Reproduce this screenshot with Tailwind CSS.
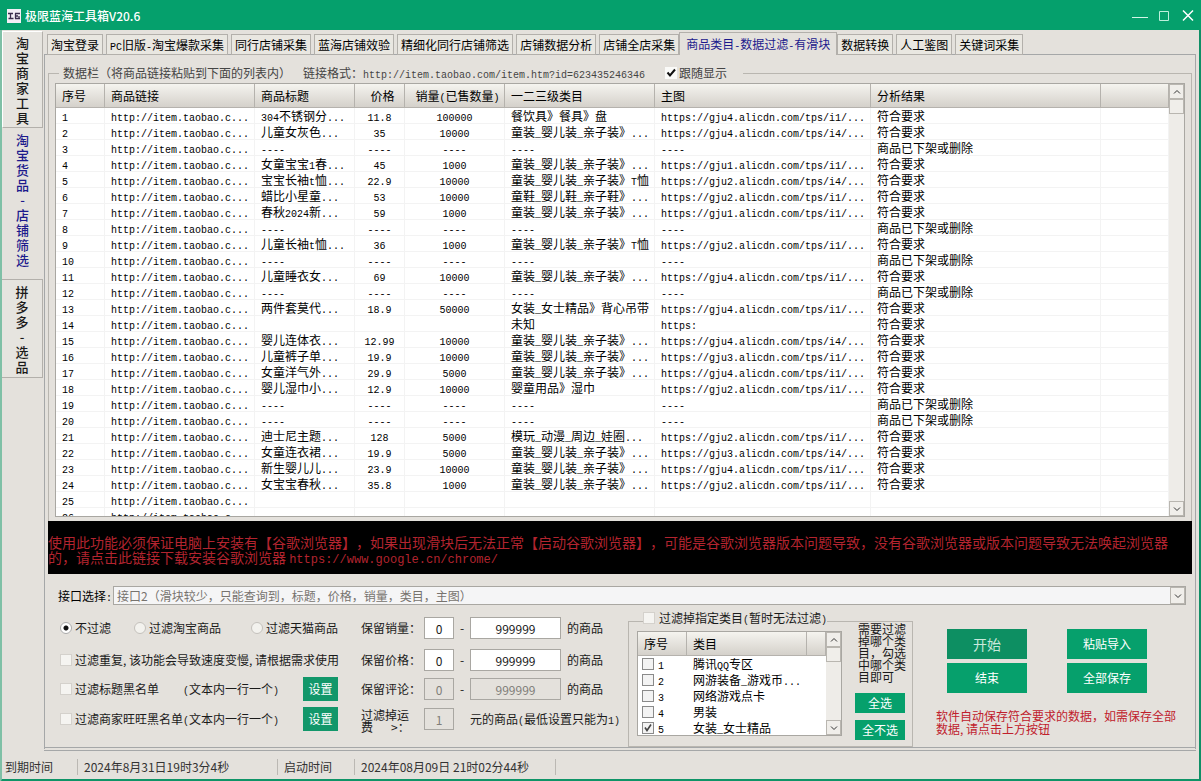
<!DOCTYPE html>
<html lang="zh-CN">
<head>
<meta charset="utf-8">
<title>极限蓝海工具箱V20.6</title>
<script src="https://cdn.jsdelivr.net/npm/@tailwindcss/browser@4"></script>
</head>
<body class="flex min-h-screen flex-col bg-[#e4e1dc] font-['Noto_Sans_CJK_SC',sans-serif] text-xs leading-4 text-[#1a1a1a] [text-spacing-trim:space-all]">

<header class="flex h-[30px] shrink-0 items-center bg-[#05a06c] pt-px pr-[5px] pl-[7px] text-white">
  <svg class="h-[14px] w-[14px] shrink-0" viewBox="0 0 14 14"><rect width="14" height="14" fill="#f3eef6"/><path d="M1 4.5h5M1.500 9.500h5M3.500 4.500v5M8 4.500h5M8.500 4.500v5M8 9.500h5M12 7v2.500M8.500 7h2.500" stroke="#3a2d4d" stroke-width="1.300" fill="none"/></svg>
  <h1 class="ml-1 grow font-medium">极限蓝海工具箱V20.6</h1>
  <div class="flex items-center gap-2">
    <button type="button" aria-label="最小化" class="h-4 w-4"><svg viewBox="0 0 16 16" class="h-4 w-4"><path d="M0 9.500h16" stroke="#d3f5e7" fill="none"/></svg></button>
    <button type="button" aria-label="最大化" class="h-4 w-4"><svg viewBox="0 0 16 16" class="h-4 w-4"><path d="M3.500 3.500h9v9h-9z" stroke="#bdf0dc" fill="none"/></svg></button>
    <button type="button" aria-label="关闭" class="h-4 w-4"><svg viewBox="0 0 16 16" class="h-4 w-4"><path d="M3 2.500l10 10M13 2.500l-10 10" stroke="#fff" stroke-width="1.500" fill="none"/></svg></button>
  </div>
</header>

<div class="flex grow flex-col border-x-2 border-b-4 border-l-[#7fc0a6] border-r-[#0f8f66] border-b-[#0f9467]">
  <div class="flex grow">
    <nav class="flex w-[41px] shrink-0 flex-col pt-px text-[13px] font-medium leading-[15px]">
      <button type="button" class="flex h-[97px] items-center justify-center border border-[#b3b0ab] bg-[#e6e4df] border-t-white border-l-white"><span class="w-[14px] break-all text-center">淘宝商家工具</span></button>
      <button type="button" class="flex h-[152px] justify-center border-b border-[#b3b0ab] pt-1 text-[#1c1a8c]"><span class="w-[14px] break-all text-center">淘宝货品<br>-<br>店铺筛选</span></button>
      <button type="button" class="flex h-[98px] justify-center border-r border-b border-[#b3b0ab] bg-[#e6e4df] pt-1"><span class="w-[14px] break-all text-center">拼多多<br>-<br>选品</span></button>
    </nav>

    <main class="ml-px flex min-w-0 grow flex-col pt-[2px] pr-[3px]">
      <div class="relative z-10 -mb-px flex items-end gap-[3px] pl-[3px] whitespace-nowrap text-black" role="tablist">
        <button type="button" role="tab" class="h-[21px] border border-[#b3b0ab] bg-[#e9e7e1] px-[3px]">淘宝登录</button>
        <button type="button" role="tab" class="h-[21px] border border-[#b3b0ab] bg-[#e9e7e1] px-[3px]"><span class="font-['Liberation_Mono',monospace] text-[10px] leading-[0]">PC</span>旧版<span class="font-['Liberation_Mono',monospace] text-[10px] leading-[0]">-</span>淘宝爆款采集</button>
        <button type="button" role="tab" class="h-[21px] border border-[#b3b0ab] bg-[#e9e7e1] px-[3px]">同行店铺采集</button>
        <button type="button" role="tab" class="h-[21px] border border-[#b3b0ab] bg-[#e9e7e1] px-[3px]">蓝海店铺效验</button>
        <button type="button" role="tab" class="h-[21px] border border-[#b3b0ab] bg-[#e9e7e1] px-[3px]">精细化同行店铺筛选</button>
        <button type="button" role="tab" class="h-[21px] border border-[#b3b0ab] bg-[#e9e7e1] px-[3px]">店铺数据分析</button>
        <button type="button" role="tab" class="h-[21px] border border-[#b3b0ab] bg-[#e9e7e1] px-[3px]">店铺全店采集</button>
        <button type="button" role="tab" aria-selected="true" class="-ml-[3px] h-[23px] border border-b-0 border-[#b3b0ab] bg-[#e4e1dc] px-[6px] text-[#1c1a8c]">商品类目<span class="font-['Liberation_Mono',monospace] text-[10px] leading-[0]">-</span>数据过滤<span class="font-['Liberation_Mono',monospace] text-[10px] leading-[0]">-</span>有滑块</button>
        <button type="button" role="tab" class="-ml-[3px] h-[21px] border border-[#b3b0ab] bg-[#e9e7e1] px-[3px]">数据转换</button>
        <button type="button" role="tab" class="h-[21px] border border-[#b3b0ab] bg-[#e9e7e1] px-[3px]">人工鉴图</button>
        <button type="button" role="tab" class="h-[21px] border border-[#b3b0ab] bg-[#e9e7e1] px-[3px]">关键词采集</button>
      </div>

      <section class="flex grow flex-col border border-[#a5a7a8] border-b-4 border-b-[#a5a7a8] px-[3px] [border-bottom-style:double]">
        <fieldset class="mt-2 border border-b-0 border-[#b9b6b0] px-[6px] pb-1">
          <legend class="ml-1 flex h-5 items-center gap-5 pr-4 pl-1 text-[#444]">
            <span class="flex gap-3 whitespace-nowrap"><span>数据栏（将商品链接粘贴到下面的列表内）</span><span>链接格式：<span class="font-['Liberation_Mono',monospace] text-[10px] leading-[0]">http://item.taobao.com/item.htm?id=623435246346</span></span></span>
            <label class="flex items-center gap-[2px] whitespace-nowrap"><span class="grid"><input type="checkbox" checked class="col-start-1 row-start-1 h-3 w-3 appearance-none bg-[#fafaf8]"><svg class="pointer-events-none col-start-1 row-start-1 h-3 w-3" viewBox="0 0 12 12"><path d="M2.500 5.500l2.500 3 5-6" fill="none" stroke="#111" stroke-width="2"/></svg></span>跟随显示</label>
          </legend>
          <div class="flex h-[434px] border border-[#a9a7a2] bg-white">
            <div class="min-w-0 grow overflow-hidden">
              <table class="w-full table-fixed border-separate border-spacing-0 text-left text-black">
                <colgroup><col class="w-[49px]"><col class="w-[150px]"><col class="w-[100px]"><col class="w-[50px]"><col class="w-[100px]"><col class="w-[150px]"><col class="w-[216px]"><col class="w-[230px]"><col></colgroup>
                <thead class="bg-linear-to-b from-[#f5f4ef] to-[#d3cfc9]">
                  <tr class="h-6 whitespace-nowrap *:border-r *:border-b *:border-[#b5b2ad] *:p-0 *:pl-[6px] *:font-normal">
                    <th>序号</th><th>商品链接</th><th>商品标题</th><th class="text-center">价格</th><th class="text-center">销量<span class="font-['Liberation_Mono',monospace] text-[10px] leading-[0]">(</span>已售数量<span class="font-['Liberation_Mono',monospace] text-[10px] leading-[0]">)</span></th><th>一二三级类目</th><th>主图</th><th>分析结果</th><th></th>
                  </tr>
                </thead>
                <tbody id="goods"></tbody>
              </table>
            </div>
            <div class="flex w-[15px] shrink-0 flex-col bg-[#eeece8]">
              <div class="flex h-[15px] items-center justify-center border border-[#b9b6b0] bg-[#f0eeea]"><svg class="h-2 w-2" viewBox="0 0 8 8"><path d="M1 5.500l3-3 3 3" fill="none" stroke="#333"/></svg></div>
              <div class="h-[15px] border border-[#b9b6b0] bg-[#f0eeea]"></div>
              <div class="grow"></div>
              <div class="flex h-[15px] items-center justify-center border border-[#b9b6b0] bg-[#f0eeea]"><svg class="h-2 w-2" viewBox="0 0 8 8"><path d="M1 2.500l3 3 3-3" fill="none" stroke="#333"/></svg></div>
            </div>
          </div>
        </fieldset>

        <p class="h-[53px] shrink-0 bg-black pt-[14px] pr-5 text-sm leading-[15px] text-[#b3242f]">使用此功能必须保证电脑上安装有【谷歌浏览器】，如果出现滑块后无法正常【启动谷歌浏览器】，可能是谷歌浏览器版本问题导致，没有谷歌浏览器或版本问题导致无法唤起浏览器的，请点击此链接下载安装谷歌浏览器 <a href="https://www.google.cn/chrome/" class="font-['Liberation_Mono',monospace] text-xs leading-[0]">https://www.google.cn/chrome/</a></p>

        <div class="mt-3 flex items-center pr-[6px] pl-[10px]">
          <label for="api" class="w-[55px] shrink-0 whitespace-nowrap text-black">接口选择<span class="font-['Liberation_Mono',monospace] text-[10px] leading-[0]">:</span></label>
          <div class="flex h-[19px] grow border border-[#a9a7a2] bg-[#f5f5f6]">
            <select id="api" class="min-w-0 grow appearance-none pl-[3px] text-[#77736e]"><option>接口2（滑块较少，只能查询到，标题，价格，销量，类目，主图）</option></select>
            <span class="flex w-[15px] items-center justify-center border border-[#b9b6b0] bg-[#f0eeea]"><svg class="h-2 w-2" viewBox="0 0 8 8"><path d="M1 2.500l3 3 3-3" fill="none" stroke="#333"/></svg></span>
          </div>
        </div>

        <div class="flex items-start pt-[7px] pl-3 whitespace-nowrap">
          <div class="flex w-[301px] shrink-0 flex-col">
            <div class="flex h-8 items-center">
              <label class="flex w-[74px] items-center gap-[3px]"><input type="radio" name="scope" checked class="h-3 w-3 appearance-none rounded-full border border-[#aaa] bg-white bg-[radial-gradient(#111_0_2px,#fff_3px)]">不过滤</label>
              <label class="flex w-[117px] items-center gap-[3px]"><input type="radio" name="scope" class="h-3 w-3 appearance-none rounded-full border border-[#c4c1bc] bg-[#f3f2ee]">过滤淘宝商品</label>
              <label class="flex items-center gap-[3px]"><input type="radio" name="scope" class="h-3 w-3 appearance-none rounded-full border border-[#c4c1bc] bg-[#f3f2ee]">过滤天猫商品</label>
            </div>
            <label class="flex h-8 items-center gap-[3px]"><input type="checkbox" class="h-3 w-3 shrink-0 appearance-none border border-[#d4d1cc] bg-[#f5f4f1]"><span>过滤重复, 该功能会导致速度变慢, 请根据需求使用</span></label>
            <div class="flex h-[26px] items-center">
              <label class="flex w-[123px] items-center gap-[3px]"><input type="checkbox" class="h-3 w-3 shrink-0 appearance-none border border-[#d4d1cc] bg-[#f5f4f1]">过滤标题黑名单</label>
              <span class="w-[120px]"><span class="font-['Liberation_Mono',monospace] text-[10px] leading-[0]">(</span>文本内一行一个<span class="font-['Liberation_Mono',monospace] text-[10px] leading-[0]">)</span></span>
              <button type="button" class="h-6 w-[35px] bg-[#12976a] text-white">设置</button>
            </div>
            <div class="flex h-[34px] items-center">
              <label class="flex w-[123px] items-center gap-[3px]"><input type="checkbox" class="h-3 w-3 shrink-0 appearance-none border border-[#d4d1cc] bg-[#f5f4f1]">过滤商家旺旺黑名单</label>
              <span class="w-[120px]"><span class="font-['Liberation_Mono',monospace] text-[10px] leading-[0]">(</span>文本内一行一个<span class="font-['Liberation_Mono',monospace] text-[10px] leading-[0]">)</span></span>
              <button type="button" class="h-6 w-[35px] bg-[#12976a] text-white">设置</button>
            </div>
          </div>

          <div class="flex w-[267px] shrink-0 flex-col">
            <div class="flex h-8 items-center"><label for="s1" class="w-[63px]">保留销量：</label><input id="s1" value="0" class="h-[22px] w-[30px] border border-[#a9a7a2] bg-white text-center"><span class="w-4 text-center">-</span><input aria-label="销量上限" value="999999" class="h-[22px] w-[91px] border border-[#a9a7a2] bg-white text-center"><span class="pl-[6px]">的商品</span></div>
            <div class="flex h-8 items-center"><label for="s2" class="w-[63px]">保留价格：</label><input id="s2" value="0" class="h-[22px] w-[30px] border border-[#a9a7a2] bg-white text-center"><span class="w-4 text-center">-</span><input aria-label="价格上限" value="999999" class="h-[22px] w-[91px] border border-[#a9a7a2] bg-white text-center"><span class="pl-[6px]">的商品</span></div>
            <div class="flex h-[26px] items-center"><label for="s3" class="w-[63px]">保留评论：</label><input id="s3" value="0" disabled class="h-[22px] w-[30px] border border-[#a9a7a2] text-center text-[#807d79]"><span class="w-4 text-center">-</span><input aria-label="评论上限" value="999999" disabled class="h-[22px] w-[91px] border border-[#a9a7a2] text-center text-[#807d79]"><span class="pl-[6px]">的商品</span></div>
            <div class="flex h-[34px] items-center"><label for="s4" class="w-[63px] pt-1 leading-3">过滤掉运<br>费&emsp;&ensp;&gt;：</label><input id="s4" value="1" disabled class="h-[22px] w-[30px] border border-[#a9a7a2] text-center text-[#807d79]"><span class="pl-4">元的商品<span class="font-['Liberation_Mono',monospace] text-[10px] leading-[0]">(</span>最低设置只能为<span class="font-['Liberation_Mono',monospace] text-[10px] leading-[0]">1)</span></span></div>
          </div>

          <fieldset class="-mt-[2px] w-[285px] shrink-0 border border-[#b9b6b0] pr-[6px] pl-2">
            <legend class="ml-[6px] h-[22px] pb-[6px]"><label class="flex items-center gap-1"><input type="checkbox" class="h-3 w-3 appearance-none border border-[#d4d1cc] bg-[#f5f4f1]"><span>过滤掉指定类目<span class="font-['Liberation_Mono',monospace] text-[10px] leading-[0]">(</span>暂时无法过滤<span class="font-['Liberation_Mono',monospace] text-[10px] leading-[0]">)</span></span></label></legend>
            <div class="-mt-[9px] flex justify-between pb-[6px]">
              <div class="mt-2 flex h-[105px] w-[205px] border border-[#a9a7a2] bg-white text-black">
                <div class="min-w-0 grow overflow-hidden">
                  <table class="w-full table-fixed border-separate border-spacing-0 text-left">
                    <colgroup><col class="w-[49px]"><col class="w-[120px]"><col></colgroup>
                    <thead class="bg-linear-to-b from-[#f5f4ef] to-[#d3cfc9]"><tr class="h-6 *:border-r *:border-b *:border-[#b5b2ad] *:p-0 *:pl-[6px] *:font-normal"><th>序号</th><th>类目</th><th></th></tr></thead>
                    <tbody id="cats"></tbody>
                  </table>
                </div>
                <div class="flex w-[15px] shrink-0 flex-col bg-[#eeece8]">
                  <div class="flex h-[15px] items-center justify-center border border-[#b9b6b0] bg-[#f0eeea]"><svg class="h-2 w-2" viewBox="0 0 8 8"><path d="M1 5.500l3-3 3 3" fill="none" stroke="#333"/></svg></div>
                  <div class="h-[15px] border border-[#b9b6b0] bg-[#f0eeea]"></div>
                  <div class="grow"></div>
                  <div class="flex h-[15px] items-center justify-center border border-[#b9b6b0] bg-[#f0eeea]"><svg class="h-2 w-2" viewBox="0 0 8 8"><path d="M1 2.500l3 3 3-3" fill="none" stroke="#333"/></svg></div>
                </div>
              </div>
              <div class="flex w-[51px] flex-col gap-[7px]">
                <p class="mb-[3px] pl-[3px] leading-3 whitespace-normal">需要过滤掉哪个类目，勾选中哪个类目即可</p>
                <button type="button" class="h-5 w-[50px] bg-[#06a06c] text-white">全选</button>
                <button type="button" class="h-5 w-[50px] bg-[#06a06c] text-white">全不选</button>
              </div>
            </div>
          </fieldset>

          <div class="ml-[23px] w-[241px] pt-[17px]">
            <div class="grid grid-cols-[80px_80px] gap-x-10 gap-y-1 pl-[11px]">
              <button type="button" class="h-[30px] bg-[#0d8f62] text-sm text-[#c9e8dc]">开始</button>
              <button type="button" class="h-[30px] bg-[#06a06c] text-white">粘贴导入</button>
              <button type="button" class="h-[30px] bg-[#06a06c] text-white">结束</button>
              <button type="button" class="h-[30px] bg-[#06a06c] text-white">全部保存</button>
            </div>
            <p class="pt-4 leading-[13px] whitespace-normal text-[#c0202c]">软件自动保存符合要求的数据，如需保存全部数据, 请点击上方按钮</p>
          </div>
        </div>
      </section>
    </main>
  </div>

  <footer class="flex h-7 items-center whitespace-nowrap pt-1 text-[#333]">
    <span class="w-[76px] border-r border-[#bbb8b3] pl-[3px]">到期时间</span>
    <span class="w-[200px] border-r border-[#bbb8b3] pl-[6px]">2024年8月31日19时3分4秒</span>
    <span class="w-[77px] border-r border-[#bbb8b3] pl-[6px]">启动时间</span>
    <span class="w-[201px] border-r border-[#bbb8b3] pl-[6px]">2024年08月09日 21时02分44秒</span>
  </footer>
</div>

<script>
// Latin runs use a half-width monospace so that two of them span one Chinese character.
const mix = s => s.replace(/[\x20-\x7e]+/g, m => `<span class="font-['Liberation_Mono',monospace] text-[10px] leading-[0]">${m}</span>`);
const baby = '童装_婴儿装_亲子装》...';
const ok = '符合要求', gone = '商品已下架或删除', none = '----';
const pic = (a, b) => `https://gju${a}.alicdn.com/tps/i${b}/...`;
const off = [none, none, none, none, none, gone];
const rows = [
  ['304不锈钢分...', '11.8', '100000', '餐饮具》餐具》盘', pic(4, 1), ok],
  ['儿童女灰色...', '35', '10000', baby, pic(4, 4), ok],
  off,
  ['女童宝宝1春...', '45', '1000', baby, pic(1, 1), ok],
  ['宝宝长袖t恤...', '22.9', '10000', '童装_婴儿装_亲子装》T恤', pic(2, 4), ok],
  ['蜡比小星童...', '53', '10000', '童鞋_婴儿鞋_亲子鞋》...', pic(2, 1), ok],
  ['春秋2024新...', '59', '1000', baby, pic(1, 1), ok],
  off,
  ['儿童长袖t恤...', '36', '1000', '童装_婴儿装_亲子装》T恤', pic(2, 1), ok],
  off,
  ['儿童睡衣女...', '69', '10000', baby, pic(4, 1), ok],
  off,
  ['两件套莫代...', '18.9', '50000', '女装_女士精品》背心吊带', pic(4, 1), ok],
  ['', '', '', '未知', 'https:', ok],
  ['婴儿连体衣...', '12.99', '10000', baby, pic(4, 4), ok],
  ['儿童裤子单...', '19.9', '10000', baby, pic(3, 1), ok],
  ['女童洋气外...', '29.9', '5000', baby, pic(4, 1), ok],
  ['婴儿湿巾小...', '12.9', '10000', '婴童用品》湿巾', pic(2, 1), ok],
  off,
  off,
  ['迪士尼主题...', '128', '5000', '模玩_动漫_周边_娃圈...', pic(2, 1), ok],
  ['女童连衣裙...', '19.9', '5000', baby, pic(3, 4), ok],
  ['新生婴儿儿...', '23.9', '10000', baby, pic(4, 1), ok],
  ['女宝宝春秋...', '35.8', '1000', baby, pic(2, 1), ok],
  ['', '', '', '', '', ''],
  ['', '', '', '', '', ''],
];
document.getElementById('goods').innerHTML = rows.map((r, i) => {
  const cells = [String(i + 1), 'http://item.taobao.c...', ...r, ''];
  return '<tr class="h-4 whitespace-nowrap leading-[15px]">' + cells.map((c, k) =>
    `<td class="${k === 3 || k === 4 ? 'overflow-hidden border-r border-b border-[#f3f3f3] p-0 text-center' : 'overflow-hidden border-r border-b border-[#f3f3f3] p-0 pl-[6px]'}">${mix(c)}</td>`).join('') + '</tr>';
}).join('');

const cats = ['腾讯QQ专区', '网游装备_游戏币...', '网络游戏点卡', '男装', '女装_女士精品'];
document.getElementById('cats').innerHTML = cats.map((c, i) =>
  `<tr class="h-4 leading-4"><td class="p-0 pl-1"><label class="flex items-center gap-1"><span class="grid"><input type="checkbox" ${i === 4 ? 'checked' : ''} class="col-start-1 row-start-1 h-3 w-3 appearance-none border border-[#8a8a8a] bg-[#f3f3f3]">${i === 4 ? '<svg class="pointer-events-none col-start-1 row-start-1 h-3 w-3" viewBox="0 0 12 12"><path d="M3 5.500l2 3 4-6" fill="none" stroke="#444" stroke-width="1.600"/></svg>' : ''}</span><span>${mix(String(i + 1))}</span></label></td><td class="p-0 pl-[6px]" colspan="2">${mix(c)}</td></tr>`).join('');
</script>
</body>
</html>
